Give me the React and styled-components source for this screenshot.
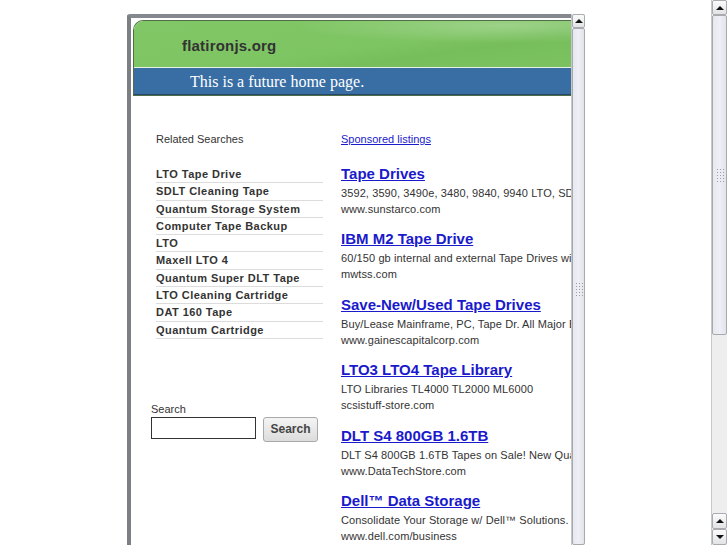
import React from "react";
import styled, { createGlobalStyle } from "styled-components";

const GlobalStyle = createGlobalStyle`
  html, body {
    margin: 0;
    padding: 0;
    background: #fff;
    overflow: hidden;
  }
  body {
    font-family: "Liberation Sans", Arial, sans-serif;
  }
`;

const related = [
  "LTO Tape Drive",
  "SDLT Cleaning Tape",
  "Quantum Storage System",
  "Computer Tape Backup",
  "LTO",
  "Maxell LTO 4",
  "Quantum Super DLT Tape",
  "LTO Cleaning Cartridge",
  "DAT 160 Tape",
  "Quantum Cartridge",
];

const ads = [
  {
    title: "Tape Drives",
    desc: "3592, 3590, 3490e, 3480, 9840, 9940 LTO, SDLT, DLT Tapes in Stock",
    url: "www.sunstarco.com",
  },
  {
    title: "IBM M2 Tape Drive",
    desc: "60/150 gb internal and external Tape Drives with warranty",
    url: "mwtss.com",
  },
  {
    title: "Save-New/Used Tape Drives",
    desc: "Buy/Lease Mainframe, PC, Tape Dr. All Major Brands",
    url: "www.gainescapitalcorp.com",
  },
  {
    title: "LTO3 LTO4 Tape Library",
    desc: "LTO Libraries TL4000 TL2000 ML6000",
    url: "scsistuff-store.com",
  },
  {
    title: "DLT S4 800GB 1.6TB",
    desc: "DLT S4 800GB 1.6TB Tapes on Sale! New Quantum Media",
    url: "www.DataTechStore.com",
  },
  {
    title: "Dell\u2122 Data Storage",
    desc: "Consolidate Your Storage w/ Dell\u2122 Solutions. Learn More",
    url: "www.dell.com/business",
  },
];

const Page = styled.div`
  display: flex;
  height: 545px;
  overflow: hidden;
`;

const Main = styled.div`
  flex: 1;
  padding: 14px 0 0 127px;
`;

const Frame = styled.div`
  display: flex;
  width: 458px;
  height: 531px;
  overflow: hidden;
`;

const FrameView = styled.div`
  flex: 1;
  min-width: 0;
  overflow: hidden;
  background: #fff;
  border-left: 4px solid #7c7f83;
  border-top: 4px solid #85888c;
  border-top-left-radius: 3px;
  padding: 2px 0 0 2px;
`;

const Header = styled.div`
  border: 1px solid #4f6e48;
  border-right: none;
  border-top-left-radius: 10px;
  overflow: hidden;
`;

const Brand = styled.div`
  height: 47px;
  display: flex;
  align-items: center;
  padding-left: 48px;
  padding-top: 3px;
  box-sizing: border-box;
  background:
    radial-gradient(ellipse 70% 55% at 85% 10%, rgba(255, 255, 255, 0.24), transparent 70%),
    linear-gradient(172deg, #82c767 0%, #7dc462 55%, #76be5b 70%, #7cc261 100%);
  border-bottom: 1px solid #e8f2e2;
  font-size: 15px;
  font-weight: bold;
  color: #333;
  letter-spacing: 0.2px;
`;

const Tagline = styled.div`
  height: 27px;
  display: flex;
  align-items: center;
  padding-left: 56px;
  padding-top: 1px;
  box-sizing: border-box;
  background: #396ea5;
  border-bottom: 1px solid #25476c;
  font-family: "Liberation Serif", "Times New Roman", serif;
  font-size: 16px;
  color: #fff;
`;

const Body = styled.div`
  display: flex;
  gap: 18px;
  padding: 36px 0 0 18px;
  font-size: 11px;
  color: #333;
`;

const LeftCol = styled.div`
  width: 172px;
  flex-shrink: 0;
`;

const SectionLabel = styled.div`
  margin-left: 5px;
  line-height: 14px;
`;

const RelatedList = styled.ul`
  list-style: none;
  margin: 20px 0 0 5px;
  padding: 0;
`;

const RelatedItem = styled.li`
  height: 16.3px;
  line-height: 17px;
  border-bottom: 1px solid #dcdcdc;
  font-weight: bold;
  color: #333;
  letter-spacing: 0.45px;
  white-space: nowrap;
`;

const SearchForm = styled.form`
  margin-top: 63px;
`;

const SearchLabel = styled.label`
  display: block;
  line-height: 14px;
`;

const SearchRow = styled.div`
  display: flex;
  align-items: flex-start;
  gap: 7px;
  margin-top: 1px;
`;

const SearchInput = styled.input`
  width: 105px;
  height: 22px;
  box-sizing: border-box;
  border: 1px solid #333;
  padding: 0 3px;
  margin: 0;
  background: #fff;
`;

const SearchButton = styled.button`
  width: 55px;
  height: 25px;
  box-sizing: border-box;
  border: 1px solid #a9a9a9;
  border-radius: 3px;
  background: linear-gradient(#f4f4f4, #dcdcdc);
  font-family: "Liberation Sans", Arial, sans-serif;
  font-size: 12px;
  font-weight: bold;
  color: #444;
  padding: 0;
`;

const RightCol = styled.div`
  flex: 1;
  min-width: 0;
`;

const SponsoredLink = styled.a`
  display: block;
  line-height: 14px;
  color: #1a1acc;
  text-decoration: underline;
`;

const AdList = styled.div`
  margin-top: 19px;
`;

const Ad = styled.div`
  height: 65.4px;
  white-space: nowrap;
`;

const AdTitle = styled.a`
  display: block;
  font-size: 15px;
  line-height: 18px;
  font-weight: bold;
  color: #1a1acc;
  text-decoration: underline;
`;

const AdText = styled.div`
  margin-top: 2px;
  line-height: 17px;
  color: #333;
  letter-spacing: 0.1px;
`;

const AdUrl = styled.div`
  line-height: 15px;
  color: #333;
  letter-spacing: 0.1px;
`;

const Scrollbar = styled.div`
  width: ${({ $w }) => $w}px;
  flex-shrink: 0;
  display: flex;
  flex-direction: column;
  background: #f1f1f1;
  border-left: 1px solid #c7c7c7;
  box-sizing: border-box;
`;

const Arrow = styled.div`
  height: ${({ $h }) => $h}px;
  flex-shrink: 0;
  display: flex;
  align-items: center;
  justify-content: center;
  box-sizing: border-box;
  border: 1px solid #a9abb0;
  border-radius: 2px;
  background: linear-gradient(#fbfbfb, #e2e3e6);

  &::after {
    content: "";
    width: 0;
    height: 0;
    border-left: 4px solid transparent;
    border-right: 4px solid transparent;
    ${({ $down }) =>
      $down
        ? "border-top: 4px solid #111;"
        : "border-bottom: 4px solid #111;"}
  }
`;

const Thumb = styled.div`
  flex: ${({ $grow }) => ($grow ? 1 : "none")};
  height: ${({ $h }) => ($h ? `${$h}px` : "auto")};
  display: flex;
  flex-direction: column;
  align-items: center;
  padding-top: ${({ $gripTop }) => $gripTop}px;
  box-sizing: border-box;
  border: 1px solid #a7a9ad;
  border-radius: 2px;
  background: linear-gradient(90deg, #e6e8ef, #eeeff7 50%, #e2e4ea);
`;

const Grip = styled.div`
  width: 8px;
  height: 16px;
  background-image: radial-gradient(circle, #9c9ea4 0.7px, transparent 0.9px);
  background-size: 3px 3px;
`;

const Track = styled.div`
  flex: 1;
  background-color: #f6f6f6;
  background-image: radial-gradient(circle, #e4e4e4 0.6px, transparent 0.8px);
  background-size: 2px 2px;
`;

export default function App() {
  return (
    <>
      <GlobalStyle />
      <Page>
        <Main>
          <Frame>
            <FrameView>
              <Header>
                <Brand>flatironjs.org</Brand>
                <Tagline>This is a future home page.</Tagline>
              </Header>
              <Body>
                <LeftCol>
                  <SectionLabel>Related Searches</SectionLabel>
                  <RelatedList>
                    {related.map((r) => (
                      <RelatedItem key={r}>{r}</RelatedItem>
                    ))}
                  </RelatedList>
                  <SearchForm onSubmit={(e) => e.preventDefault()}>
                    <SearchLabel htmlFor="q">Search</SearchLabel>
                    <SearchRow>
                      <SearchInput id="q" type="text" />
                      <SearchButton type="submit">Search</SearchButton>
                    </SearchRow>
                  </SearchForm>
                </LeftCol>
                <RightCol>
                  <SponsoredLink href="#">Sponsored listings</SponsoredLink>
                  <AdList>
                    {ads.map((ad) => (
                      <Ad key={ad.title}>
                        <AdTitle href="#">{ad.title}</AdTitle>
                        <AdText>{ad.desc}</AdText>
                        <AdUrl>{ad.url}</AdUrl>
                      </Ad>
                    ))}
                  </AdList>
                </RightCol>
              </Body>
            </FrameView>
            <Scrollbar $w={14}>
              <Arrow $h={14} />
              <Thumb $grow $gripTop={253}>
                <Grip />
              </Thumb>
            </Scrollbar>
          </Frame>
        </Main>
        <Scrollbar $w={16}>
          <Arrow $h={15} />
          <Thumb $h={320} $gripTop={152}>
            <Grip />
          </Thumb>
          <Track />
          <Arrow $h={16} />
          <Arrow $h={16} $down />
        </Scrollbar>
      </Page>
    </>
  );
}
